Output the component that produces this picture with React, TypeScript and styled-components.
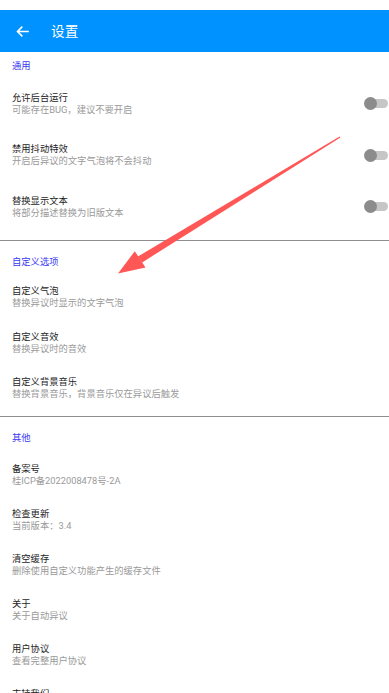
import React from "react";
import styled, { createGlobalStyle } from "styled-components";

const Global = createGlobalStyle`
  html, body {
    margin: 0;
    padding: 0;
    background: #ffffff;
    overflow: hidden;
  }
  body {
    font-family: Roboto, "Noto Sans CJK SC", "Noto Sans", sans-serif;
  }
`;

const Page = styled.div`
  position: relative;
  width: 389px;
  height: 693px;
  overflow: hidden;
  padding-top: 10px;
  box-sizing: border-box;
  background: #fff;
`;

const AppBar = styled.div`
  height: 42px;
  background: #0092ff;
  display: flex;
  align-items: center;
  padding-left: 15px;
  gap: 21px;
`;

const BackButton = styled.div`
  width: 15px;
  height: 14px;
  display: flex;
  align-items: center;
  justify-content: center;
`;

const Title = styled.div`
  color: #fff;
  font-size: 13.6px;
  line-height: 16px;
  letter-spacing: 0.2px;
`;

const Section = styled.div<{ $top: number; $bottom: number }>`
  display: flex;
  flex-direction: column;
  padding-top: ${(p) => p.$top}px;
  padding-bottom: ${(p) => p.$bottom}px;
`;

const SectionHeader = styled.div<{ $gap: number }>`
  padding-left: 12px;
  font-size: 9.3px;
  line-height: 12px;
  color: #3a3af2;
  margin-bottom: ${(p) => p.$gap}px;
`;

const Divider = styled.div`
  height: 1px;
  background: #8e8e8e;
`;

const Row = styled.div<{ $h: number }>`
  height: ${(p) => p.$h}px;
  display: flex;
  align-items: center;
  padding-left: 12px;
  padding-right: 1px;
`;

const TextCol = styled.div`
  flex: 1;
  display: flex;
  flex-direction: column;
`;

const ItemTitle = styled.div`
  font-size: 9.3px;
  line-height: 12px;
  color: #1e1e1e;
`;

const ItemSub = styled.div`
  font-size: 9.3px;
  line-height: 12px;
  color: #9a9a9a;
`;

const Switch = styled.div`
  position: relative;
  width: 24px;
  height: 13px;
  display: flex;
  align-items: center;
  justify-content: flex-end;
`;

const Track = styled.div`
  width: 19px;
  height: 9px;
  border-radius: 5px;
  background: #c6c6c6;
`;

const Thumb = styled.div`
  position: absolute;
  left: 0;
  top: 0;
  width: 13px;
  height: 13px;
  border-radius: 50%;
  background: #8c8c8c;
`;

const Overlay = styled.svg`
  position: absolute;
  left: 0;
  top: 0;
  pointer-events: none;
`;

type Item = { title: string; sub: string };

const general: Item[] = [
  { title: "允许后台运行", sub: "可能存在BUG，建议不要开启" },
  { title: "禁用抖动特效", sub: "开启后异议的文字气泡将不会抖动" },
  { title: "替换显示文本", sub: "将部分描述替换为旧版文本" },
];

const custom: Item[] = [
  { title: "自定义气泡", sub: "替换异议时显示的文字气泡" },
  { title: "自定义音效", sub: "替换异议时的音效" },
  { title: "自定义背景音乐", sub: "替换背景音乐，背景音乐仅在异议后触发" },
];

const others: Item[] = [
  { title: "备案号", sub: "桂ICP备2022008478号-2A" },
  { title: "检查更新", sub: "当前版本：3.4" },
  { title: "清空缓存", sub: "删除使用自定义功能产生的缓存文件" },
  { title: "关于", sub: "关于自动异议" },
  { title: "用户协议", sub: "查看完整用户协议" },
  { title: "支持我们", sub: "请开发者喝杯咖啡" },
];

const ItemRow = ({ item, h, toggle }: { item: Item; h: number; toggle?: boolean }) => (
  <Row $h={h}>
    <TextCol>
      <ItemTitle>{item.title}</ItemTitle>
      <ItemSub>{item.sub}</ItemSub>
    </TextCol>
    {toggle && (
      <Switch>
        <Track />
        <Thumb />
      </Switch>
    )}
  </Row>
);

export default function App() {
  return (
    <>
      <Global />
      <Page>
        <AppBar>
          <BackButton>
            <svg width="13" height="11" viewBox="0 0 13 11">
              <path
                d="M12 5.5H1.8M5.8 1.2L1.5 5.5L5.8 9.8"
                fill="none"
                stroke="#fff"
                strokeWidth="1.6"
                strokeLinecap="square"
              />
            </svg>
          </BackButton>
          <Title>设置</Title>
        </AppBar>

        <Section $top={8} $bottom={7}>
          <SectionHeader $gap={6}>通用</SectionHeader>
          {general.map((it) => (
            <ItemRow key={it.title} item={it} h={51.5} toggle />
          ))}
        </Section>
        <Divider />

        <Section $top={15} $bottom={5}>
          <SectionHeader $gap={7}>自定义选项</SectionHeader>
          {custom.map((it) => (
            <ItemRow key={it.title} item={it} h={45.5} />
          ))}
        </Section>
        <Divider />

        <Section $top={15} $bottom={6}>
          <SectionHeader $gap={8.5}>其他</SectionHeader>
          {others.map((it) => (
            <ItemRow key={it.title} item={it} h={45} />
          ))}
        </Section>

        <Overlay width="389" height="693" viewBox="0 0 389 693">
          <polygon
            points="340.4,137.4 339.6,136.6 137.8,256.6 142.2,262.4"
            fill="#ff5656"
          />
          <polygon points="118,273.5 134.8,251.2 145.5,267.6" fill="#ff5656" />
        </Overlay>
      </Page>
    </>
  );
}
